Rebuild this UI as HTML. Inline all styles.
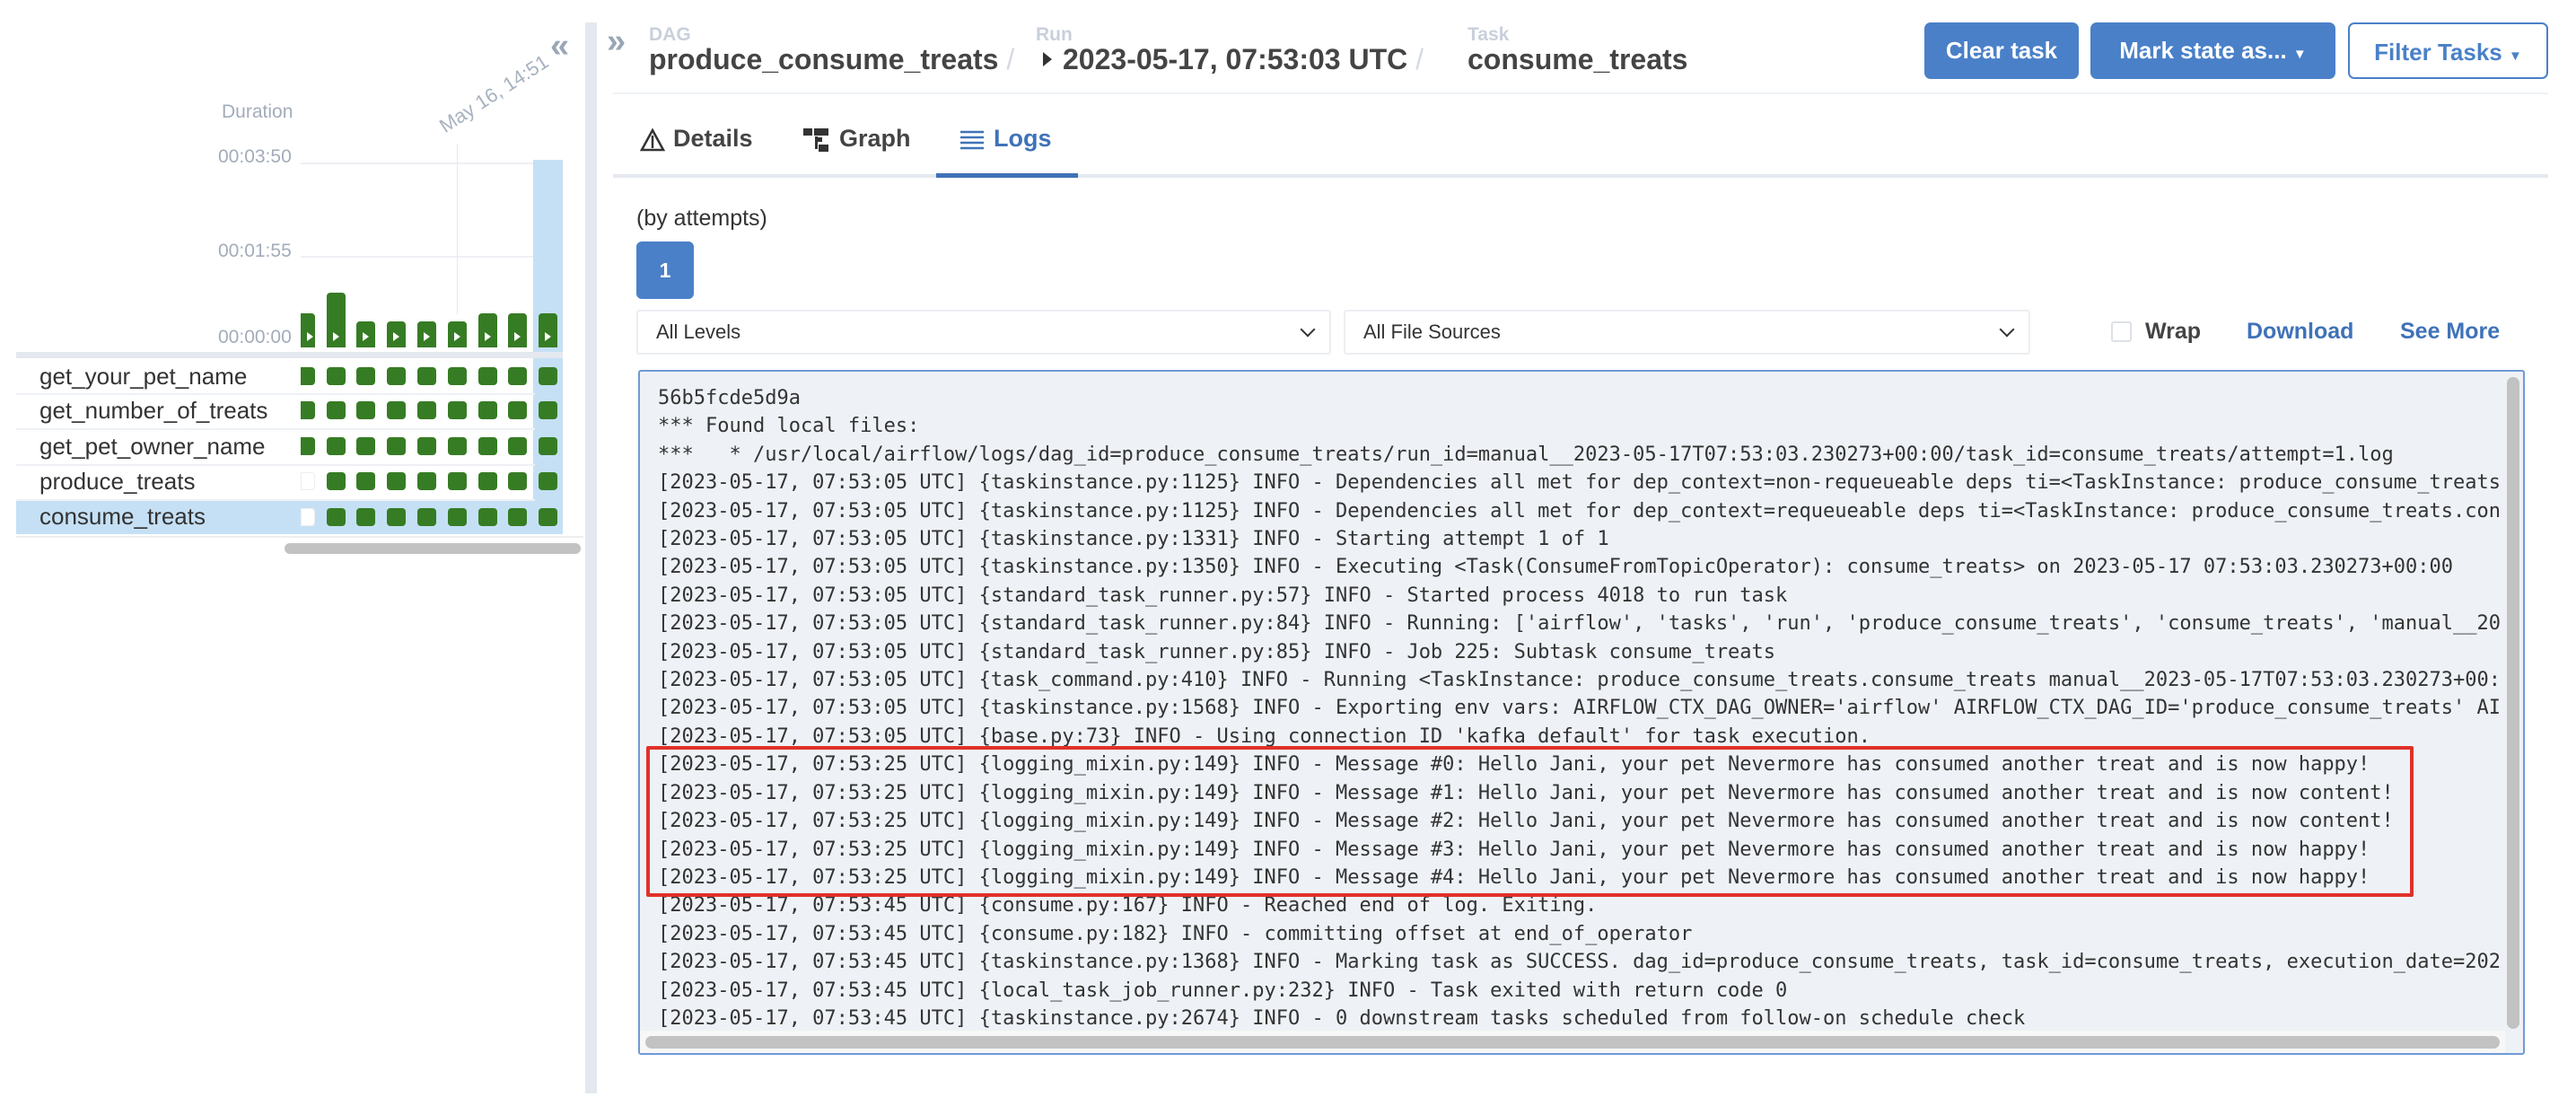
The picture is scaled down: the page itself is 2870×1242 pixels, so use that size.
<!DOCTYPE html>
<html><head><meta charset="utf-8"><style>
*{margin:0;padding:0;box-sizing:border-box}
body{width:2870px;height:1242px;background:#fff;position:relative;overflow:hidden;font-family:"Liberation Sans",Arial,sans-serif;color:#4a4a4a}
.a{position:absolute}
.lbl{color:#a3acba;font-size:21px}
.sq{position:absolute;width:21px;height:20px;background:#367c24;border-radius:4px}
.bar{position:absolute;width:21px;background:#367c24;border-radius:4px 4px 0 0}
.bar:after{content:"";position:absolute;left:7px;bottom:7px;border-left:7px solid #fff;border-top:5px solid transparent;border-bottom:5px solid transparent}
.tn{position:absolute;left:44px;font-size:26px;color:#333;line-height:39px}
.rl{position:absolute;left:18px;width:578px;height:2px;background:#eef1f5}
.btn{position:absolute;top:25px;height:63px;border-radius:7px;background:#4a80c8;color:#fff;font-weight:bold;font-size:26px;line-height:63px;text-align:center}
.sel{position:absolute;top:345px;height:50px;border:2px solid #eceef2;border-radius:3px;font-size:22px;line-height:46px;padding-left:20px;color:#333}
.car{position:absolute;right:18px;top:14px;width:12px;height:12px;border-right:2px solid #333;border-bottom:2px solid #333;transform:rotate(45deg)}
.log{position:absolute;left:711px;top:412px;width:2102px;height:763px;background:#eef2f7;border:2px solid #6f9ad6;border-radius:3px;overflow:hidden}
pre{position:absolute;left:20px;top:14px;width:2060px;overflow:hidden;font-family:"DejaVu Sans Mono","Liberation Mono",monospace;font-size:22px;line-height:31.4px;color:#333;letter-spacing:0}
.ttl{position:absolute;top:48px;font-size:32px;font-weight:bold;color:#444;white-space:nowrap}
</style></head><body>

<!-- left panel -->
<div class="a" style="left:613px;top:30px;font-size:38px;color:#9aa6b6;font-weight:bold">«</div>
<div class="a lbl" style="left:247px;top:113px">Duration</div>
<div class="a lbl" style="left:243px;top:163px">00:03:50</div>
<div class="a lbl" style="left:243px;top:268px">00:01:55</div>
<div class="a lbl" style="left:243px;top:364px">00:00:00</div>
<div class="a" style="left:335px;top:181px;width:260px;height:2px;background:#eef0f4"></div>
<div class="a" style="left:335px;top:285px;width:260px;height:2px;background:#eef0f4"></div>
<div class="a" style="left:509px;top:160px;width:1px;height:190px;background:#e6e9ee"></div>
<div class="a lbl" style="left:498px;top:128px;height:24px;transform:rotate(-33deg);transform-origin:left bottom;font-size:22px;white-space:nowrap;color:#a8b2c0">May 16, 14:51</div>
<div class="a" style="left:594px;top:178px;width:33px;height:417px;background:#c5e0f5"></div>
<div class="a" style="left:18px;top:392px;width:609px;height:7px;background:#e4e8ef"></div>

<div class="bar" style="left:335px;width:16px;top:349px;height:38px;border-radius:0 4px 0 0"></div>
<div class="bar" style="left:364px;top:326px;height:61px"></div>
<div class="bar" style="left:397px;top:358px;height:29px"></div>
<div class="bar" style="left:431px;top:358px;height:29px"></div>
<div class="bar" style="left:465px;top:358px;height:29px"></div>
<div class="bar" style="left:499px;top:358px;height:29px"></div>
<div class="bar" style="left:533px;top:349px;height:38px"></div>
<div class="bar" style="left:566px;top:349px;height:38px"></div>
<div class="bar" style="left:600px;top:349px;height:38px"></div>

<div class="a" style="left:18px;top:557px;width:609px;height:38px;background:#c5e0f5"></div>
<div class="rl" style="top:438px"></div><div class="rl" style="top:477px"></div><div class="rl" style="top:517px"></div><div class="rl" style="top:556px"></div>
<div class="a" style="left:18px;top:597px;width:632px;height:2px;background:#eee"></div>
<div class="tn" style="top:400px">get_your_pet_name</div>
<div class="tn" style="top:438px">get_number_of_treats</div>
<div class="tn" style="top:478px">get_pet_owner_name</div>
<div class="tn" style="top:517px">produce_treats</div>
<div class="tn" style="top:556px">consume_treats</div>

<div id="sqs"></div>
<div class="a" style="left:317px;top:605px;width:330px;height:12px;background:#c2c2c2;border-radius:6px"></div>

<div class="a" style="left:652px;top:25px;width:13px;height:1193px;background:#e4e8ef"></div>

<!-- header -->
<div class="a" style="left:676px;top:25px;font-size:38px;color:#9aa6b6;font-weight:bold">»</div>
<div class="a" style="left:723px;top:27px;font-size:21px;font-weight:bold;color:#c9d0db">DAG</div>
<div class="ttl" style="left:723px">produce_consume_treats <span style="color:#d5dae2;font-weight:normal">/</span></div>
<div class="a" style="left:1154px;top:27px;font-size:21px;font-weight:bold;color:#c9d0db">Run</div>
<div class="a" style="left:1162px;top:58px;border-left:10px solid #333;border-top:8px solid transparent;border-bottom:8px solid transparent"></div>
<div class="ttl" style="left:1184px">2023-05-17, 07:53:03 UTC <span style="color:#d5dae2;font-weight:normal">/</span></div>
<div class="a" style="left:1635px;top:27px;font-size:21px;font-weight:bold;color:#c9d0db">Task</div>
<div class="ttl" style="left:1635px">consume_treats</div>

<div class="btn" style="left:2144px;width:172px">Clear task</div>
<div class="btn" style="left:2329px;width:273px">Mark state as... <span style="font-size:15px">▼</span></div>
<div class="btn" style="left:2616px;width:223px;background:#fff;color:#4a80c8;border:2px solid #4a80c8">Filter Tasks <span style="font-size:15px">▼</span></div>
<div class="a" style="left:683px;top:103px;width:2156px;height:2px;background:#eef1f5"></div>

<!-- tabs -->
<svg class="a" style="left:713px;top:143px" width="28" height="26" viewBox="0 0 28 26"><path d="M14 2 L26 24 H2 Z M14 8 V22" fill="none" stroke="#333" stroke-width="2.5"/></svg>
<div class="a" style="left:750px;top:139px;font-size:27px;font-weight:bold;color:#444">Details</div>
<svg class="a" style="left:895px;top:143px" width="30" height="26" viewBox="0 0 30 26"><rect x="0" y="0" width="10" height="8" fill="#333"/><rect x="12" y="0" width="16" height="8" fill="#333"/><rect x="17" y="18" width="11" height="8" fill="#333"/><rect x="13" y="9" width="3" height="14" fill="#333"/><rect x="13" y="10" width="8" height="5" fill="#333"/></svg>
<div class="a" style="left:935px;top:139px;font-size:27px;font-weight:bold;color:#444">Graph</div>
<svg class="a" style="left:1070px;top:145px" width="26" height="22" viewBox="0 0 26 22"><path d="M0 2H26M0 8H26M0 14H26M0 20H26" stroke="#3f72b8" stroke-width="2.5"/></svg>
<div class="a" style="left:1107px;top:139px;font-size:27px;font-weight:bold;color:#3f72b8">Logs</div>
<div class="a" style="left:683px;top:194px;width:2156px;height:4px;background:#e4e8ef"></div>
<div class="a" style="left:1043px;top:193px;width:158px;height:5px;background:#3f72b8"></div>

<div class="a" style="left:709px;top:229px;font-size:25px;color:#333">(by attempts)</div>
<div class="a" style="left:709px;top:269px;width:64px;height:64px;background:#4a80c8;border-radius:6px;color:#fff;font-weight:bold;font-size:23px;line-height:64px;text-align:center">1</div>
<div class="sel" style="left:709px;width:774px">All Levels<div class="car"></div></div>
<div class="sel" style="left:1497px;width:765px">All File Sources<div class="car"></div></div>
<div class="a" style="left:2352px;top:358px;width:23px;height:23px;border:2px solid #dde1e7;border-radius:3px;background:#fff"></div>
<div class="a" style="left:2390px;top:355px;font-size:25px;font-weight:bold;color:#444">Wrap</div>
<div class="a" style="left:2503px;top:355px;font-size:25px;font-weight:bold;color:#3f72b8">Download</div>
<div class="a" style="left:2674px;top:355px;font-size:25px;font-weight:bold;color:#3f72b8">See More</div>

<div class="log">
<pre>56b5fcde5d9a
*** Found local files:
***   * /usr/local/airflow/logs/dag_id=produce_consume_treats/run_id=manual__2023-05-17T07:53:03.230273+00:00/task_id=consume_treats/attempt=1.log
[2023-05-17, 07:53:05 UTC] {taskinstance.py:1125} INFO - Dependencies all met for dep_context=non-requeueable deps ti=&lt;TaskInstance: produce_consume_treats
[2023-05-17, 07:53:05 UTC] {taskinstance.py:1125} INFO - Dependencies all met for dep_context=requeueable deps ti=&lt;TaskInstance: produce_consume_treats.con
[2023-05-17, 07:53:05 UTC] {taskinstance.py:1331} INFO - Starting attempt 1 of 1
[2023-05-17, 07:53:05 UTC] {taskinstance.py:1350} INFO - Executing &lt;Task(ConsumeFromTopicOperator): consume_treats&gt; on 2023-05-17 07:53:03.230273+00:00
[2023-05-17, 07:53:05 UTC] {standard_task_runner.py:57} INFO - Started process 4018 to run task
[2023-05-17, 07:53:05 UTC] {standard_task_runner.py:84} INFO - Running: ['airflow', 'tasks', 'run', 'produce_consume_treats', 'consume_treats', 'manual__20
[2023-05-17, 07:53:05 UTC] {standard_task_runner.py:85} INFO - Job 225: Subtask consume_treats
[2023-05-17, 07:53:05 UTC] {task_command.py:410} INFO - Running &lt;TaskInstance: produce_consume_treats.consume_treats manual__2023-05-17T07:53:03.230273+00:
[2023-05-17, 07:53:05 UTC] {taskinstance.py:1568} INFO - Exporting env vars: AIRFLOW_CTX_DAG_OWNER='airflow' AIRFLOW_CTX_DAG_ID='produce_consume_treats' AI
[2023-05-17, 07:53:05 UTC] {base.py:73} INFO - Using connection ID 'kafka_default' for task execution.
[2023-05-17, 07:53:25 UTC] {logging_mixin.py:149} INFO - Message #0: Hello Jani, your pet Nevermore has consumed another treat and is now happy!
[2023-05-17, 07:53:25 UTC] {logging_mixin.py:149} INFO - Message #1: Hello Jani, your pet Nevermore has consumed another treat and is now content!
[2023-05-17, 07:53:25 UTC] {logging_mixin.py:149} INFO - Message #2: Hello Jani, your pet Nevermore has consumed another treat and is now content!
[2023-05-17, 07:53:25 UTC] {logging_mixin.py:149} INFO - Message #3: Hello Jani, your pet Nevermore has consumed another treat and is now happy!
[2023-05-17, 07:53:25 UTC] {logging_mixin.py:149} INFO - Message #4: Hello Jani, your pet Nevermore has consumed another treat and is now happy!
[2023-05-17, 07:53:45 UTC] {consume.py:167} INFO - Reached end of log. Exiting.
[2023-05-17, 07:53:45 UTC] {consume.py:182} INFO - committing offset at end_of_operator
[2023-05-17, 07:53:45 UTC] {taskinstance.py:1368} INFO - Marking task as SUCCESS. dag_id=produce_consume_treats, task_id=consume_treats, execution_date=202
[2023-05-17, 07:53:45 UTC] {local_task_job_runner.py:232} INFO - Task exited with return code 0
[2023-05-17, 07:53:45 UTC] {taskinstance.py:2674} INFO - 0 downstream tasks scheduled from follow-on schedule check</pre>
<div class="a" style="left:2080px;top:6px;width:14px;height:726px;background:#c2c2c2;border-radius:7px"></div>
<div class="a" style="left:0;top:734px;width:2078px;height:27px;background:#f7f7f7"></div>
<div class="a" style="left:6px;top:740px;width:2066px;height:14px;background:#c2c2c2;border-radius:7px"></div>
</div>
<div class="a" style="left:720px;top:831px;width:1969px;height:168px;border:4px solid #e0302a;border-radius:2px"></div>

<script>
var xs=[335,364,397,431,465,499,533,566,600],ys=[409,447,487,526,566],h='';
for(var r=0;r<5;r++)for(var c=0;c<9;c++){
 var st='left:'+xs[c]+'px;top:'+ys[r]+'px;';
 if(c==0){st+='width:16px;border-radius:0 4px 4px 0;';if(r>=3)st+='background:#fff;border:1px solid #eee;';}
 h+='<div class="sq" style="'+st+'"></div>';}
document.getElementById('sqs').innerHTML=h;
</script>
</body></html>
